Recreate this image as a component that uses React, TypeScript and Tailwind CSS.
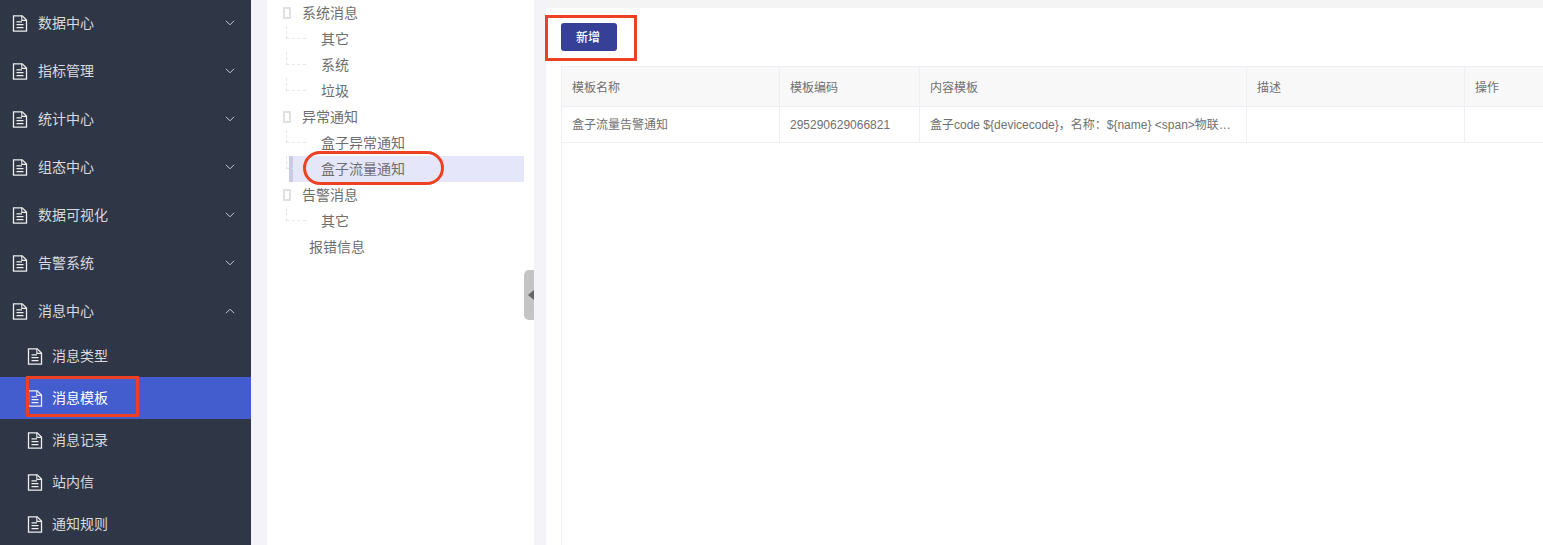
const cjk = "font-['Liberation_Sans','Noto_Sans_CJK_SC',sans-serif]";

function DocIcon() {
  return (
    <svg className="w-[16px] h-[17px] shrink-0" viewBox="0 0 16 17" fill="none" stroke="#eceded" strokeWidth="1.3">
      <path d="M1.5 .8h8.7l4.3 4.3v11.1H1.5z" />
      <path d="M9.8 .8v4.6h4.7" strokeWidth="1.1" />
      <path d="M4.5 6.8h5.5M4.5 9.7h7M4.5 12.6h7" strokeWidth="1.3" />
    </svg>
  );
}

function Chevron({ up }: { up?: boolean }) {
  return (
    <svg className="w-[10px] h-[6px] ml-auto mr-[16px]" viewBox="0 0 10 6" fill="none" stroke="#c9ccd3" strokeWidth="1">
      <path d={up ? "M1 5.2L5 1.2l4 4" : "M1 .8l4 4 4-4"} />
    </svg>
  );
}

const topMenus = ["数据中心", "指标管理", "统计中心", "组态中心", "数据可视化", "告警系统"];
const subMenus = ["消息类型", "消息模板", "消息记录", "站内信", "通知规则"];

function Sidebar() {
  return (
    <div className="w-[251px] shrink-0 bg-[#2f3646] -mt-[1px] text-[14px] text-[#d8dadf]">
      {topMenus.map((name) => (
        <div key={name} className="h-[48px] flex items-center pl-[12px]">
          <DocIcon />
          <span className="ml-[10px]">{name}</span>
          <Chevron />
        </div>
      ))}
      <div className="h-[48px] flex items-center pl-[12px]">
        <DocIcon />
        <span className="ml-[10px]">消息中心</span>
        <Chevron up />
      </div>
      {subMenus.map((name) => (
        <div
          key={name}
          className={
            name === "消息模板"
              ? "h-[42px] flex items-center pl-[27px] bg-[#435dce] text-white"
              : "h-[42px] flex items-center pl-[27px]"
          }
        >
          <DocIcon />
          <span className="ml-[9px]">{name}</span>
        </div>
      ))}
    </div>
  );
}

function GroupRow({ label }: { label: string }) {
  return (
    <div className="h-[26px] flex items-center pl-[16px]">
      <div className="w-[8px] h-[12px] border-2 border-[#e0e0e0]" />
      <span className="ml-[11px]">{label}</span>
    </div>
  );
}

function ChildRow({ label, selected }: { label: string; selected?: boolean }) {
  return (
    <div className="h-[26px] relative ml-[22px] w-[235px]">
      <div className="absolute left-[-3px] top-0 h-[13px] w-[20px] border-l border-b border-dashed border-[#e6e6e6]" />
      <div
        className={
          selected
            ? "h-full flex items-center pl-[28px] border-l-4 border-[#cbcbe6] bg-[#e6e6fa]"
            : "h-full flex items-center pl-[32px]"
        }
      >
        {label}
      </div>
    </div>
  );
}

function TreePanel() {
  return (
    <div className="w-[267px] ml-[16px] shrink-0 bg-white relative text-[14px] text-[#6e6e6e]">
      <GroupRow label="系统消息" />
      <ChildRow label="其它" />
      <ChildRow label="系统" />
      <ChildRow label="垃圾" />
      <GroupRow label="异常通知" />
      <ChildRow label="盒子异常通知" />
      <ChildRow label="盒子流量通知" selected />
      <GroupRow label="告警消息" />
      <ChildRow label="其它" />
      <div className="h-[26px] flex items-center pl-[42px]">报错信息</div>
      <div className="absolute right-0 top-[270px] w-[10px] h-[50px] bg-[#c4c4c4] rounded-l-[5px] flex items-center justify-end">
        <div className="w-0 h-0 border-y-[5px] border-y-transparent border-r-[6px] border-r-[#666666]" />
      </div>
    </div>
  );
}

const columns = ["模板名称", "模板编码", "内容模板", "描述", "操作"];
const row = [
  "盒子流量告警通知",
  "295290629066821",
  "盒子code ${devicecode}，名称：${name} <span>物联…",
  "",
  "",
];

function MainPanel() {
  return (
    <div className="flex-1 min-w-0 ml-[12px] flex flex-col">
      <div className="h-[8px] shrink-0 bg-[#f4f4f5]" />
      <div className="flex-1 bg-white pl-[15px] flex flex-col">
        <div className="h-[58px] shrink-0 pt-[15px]">
          <button className="w-[56px] h-[28px] bg-[#364096] rounded-[3px] text-white text-[12px] font-medium pt-[1px] pr-[2px]">
            新增
          </button>
        </div>
        <div className="flex-1 border-l border-[#eeeef5] text-[12px] text-[#707070]">
          <div className="grid grid-cols-[218px_140px_327px_218px_1fr] h-[41px] bg-[#f8f8f8] border-y border-[#eeeef5]">
            {columns.map((c) => (
              <div key={c} className="flex items-center pl-[10px] pt-[2px] border-r border-[#eeeef5] last:border-r-0">
                {c}
              </div>
            ))}
          </div>
          <div className="grid grid-cols-[218px_140px_327px_218px_1fr] h-[36px] border-b border-[#eeeef5]">
            {row.map((c, i) => (
              <div key={i} className="flex items-center pl-[10px] border-r border-[#eeeef5] last:border-r-0 whitespace-nowrap">
                {c}
              </div>
            ))}
          </div>
        </div>
      </div>
    </div>
  );
}

export default function App() {
  return (
    <div className={`relative flex w-[1543px] h-[545px] overflow-hidden bg-[#f3f3f8] ${cjk}`}>
      <Sidebar />
      <TreePanel />
      <MainPanel />
      {/* red annotation marks */}
      <div className="absolute left-[26px] top-[376px] w-[113px] h-[41px] border-[3px] border-[#ee4023]" />
      <div className="absolute left-[303px] top-[151px] w-[141px] h-[34px] border-[3px] border-[#ee4023] rounded-full" />
      <div className="absolute left-[545px] top-[15px] w-[92px] h-[46px] border-[3px] border-[#ee4023]" />
    </div>
  );
}
